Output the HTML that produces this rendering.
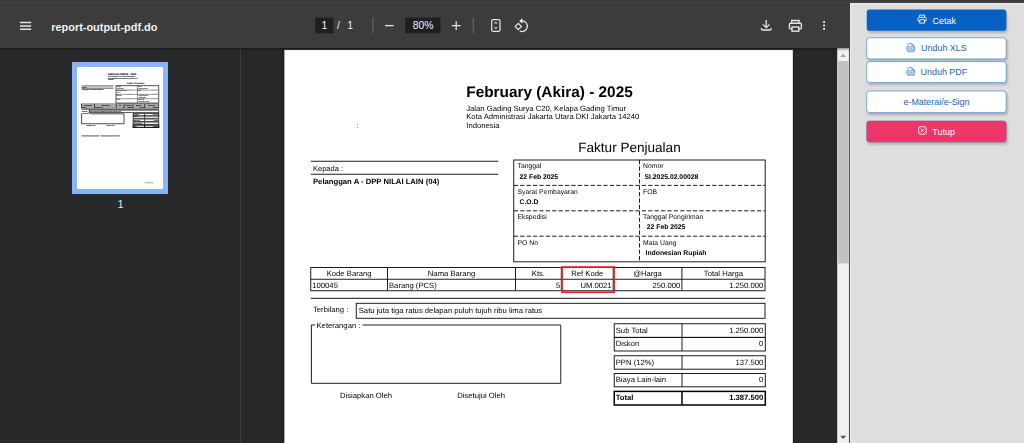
<!DOCTYPE html>
<html lang="id">
<head>
<meta charset="utf-8">
<title>report-output-pdf.do</title>
<style>
html,body{margin:0;padding:0;overflow:hidden;}
body{width:1024px;height:443px;overflow:hidden;position:relative;background:#282828;font-family:"Liberation Sans",sans-serif;}
.abs{position:absolute;}
#topstrip{left:0;top:0;width:1024px;height:3px;background:linear-gradient(#3b3c3b 0,#3b3d3b 1.2px,#434543 2.1px,#414341 2.7px,#3c3c3c 3px);}
#viewer{left:0;top:3px;width:850px;height:440px;background:#282828;overflow:hidden;}
#toolbar{left:0;top:0;width:850px;height:45px;background:#3c3c3c;box-shadow:0 1px 2.5px rgba(0,0,0,.5);z-index:5;}
#sidebar{left:0;top:45px;width:240px;height:395px;background:#28292b;border-right:1px solid #3c3c3c;}
#title{left:51.2px;top:16.5px;color:#f1f1f1;font-size:10.95px;font-weight:bold;line-height:14px;white-space:nowrap;letter-spacing:0;}
.tbtxt{color:#f1f1f1;font-size:10.4px;line-height:14px;white-space:nowrap;}
#thumbo{left:72px;top:59.3px;width:96.3px;height:131.3px;background:#8ab4f8;}
#thumb{left:76.8px;top:63.9px;width:86.5px;height:122.2px;background:#fff;overflow:hidden;}
#thumb svg{position:absolute;left:0;top:0;}
#pdfpage{left:284.0px;top:46.0px;width:510.0px;height:721.0px;}
#pdfpage svg{filter:drop-shadow(0 0 1.6px rgba(0,0,0,.7));overflow:visible;}
#pdfpage svg, #thumb svg{font-family:"Liberation Sans",sans-serif;text-rendering:geometricPrecision;}
#panel{left:850px;top:2.8px;width:174px;height:440.2px;overflow:hidden;background:#dedede;box-shadow:inset 1.2px 1.2px 0 #e9e9e9;}
.btn{left:16.5px;width:140px;box-sizing:border-box;font-size:8.95px;line-height:11px;display:flex;align-items:center;justify-content:center;white-space:nowrap;padding-top:2.6px;}
.btn svg{margin-right:5.4px;flex:none;position:relative;top:-2.1px;}
.b-blue{color:#fff;}
.b-out{color:#1565c0;padding-top:1.2px;}
.b-out svg{top:-1px;}
.b-red{color:#fff;}
</style>
</head>
<body>
<div id="topstrip" class="abs"></div>
<div id="viewer" class="abs">
  <div id="sidebar" class="abs"></div>
  <div id="thumbo" class="abs"></div>
  <div id="thumb" class="abs">
    <svg width="86.5" height="122.36" viewBox="0.35 0.85 508.5 719.3">
<text x="182.25" y="47.50" font-size="15.36" font-weight="bold" fill="#000" stroke="#000" stroke-width="0.5">February (Akira) - 2025</text>
<text x="182.25" y="61.60" font-size="7.68" fill="#000" stroke="#000" stroke-width="0.5">Jalan Gading Surya C20, Kelapa Gading Timur</text>
<text x="182.25" y="70.40" font-size="7.68" fill="#000" stroke="#000" stroke-width="0.5">Kota Administrasi Jakarta Utara DKI Jakarta 14240</text>
<text x="182.25" y="79.30" font-size="7.68" fill="#000" stroke="#000" stroke-width="0.5">Indonesia</text>
<text x="72.50" y="79.40" font-size="7.68" fill="#555" stroke="#000" stroke-width="0.5">:</text>
<text x="294.25" y="102.75" font-size="13.55" fill="#000" stroke="#000" stroke-width="0.5">Faktur Penjualan</text>
<line x1="26.75" y1="112.25" x2="214.25" y2="112.25" stroke="#1c1c1c" stroke-width="4.369999999999999"/>
<line x1="26.75" y1="125.25" x2="214.25" y2="125.25" stroke="#1c1c1c" stroke-width="4.369999999999999"/>
<text x="29.00" y="121.75" font-size="7.5" fill="#000" stroke="#000" stroke-width="0.5">Kepada :</text>
<text x="29.00" y="134.75" font-size="7.68" font-weight="bold" fill="#000" stroke="#000" stroke-width="0.5">Pelanggan A - DPP NILAI LAIN (04)</text>
<rect x="229.75" y="111.00" width="251.45" height="101.80" fill="none" stroke="#1c1c1c" stroke-width="4.369999999999999"/>
<line x1="229.75" y1="136.40" x2="481.20" y2="136.40" stroke="#1c1c1c" stroke-width="4.369999999999999" stroke-dasharray="4.3 2.1"/>
<line x1="229.75" y1="161.80" x2="481.20" y2="161.80" stroke="#1c1c1c" stroke-width="4.369999999999999" stroke-dasharray="4.3 2.1"/>
<line x1="229.75" y1="187.20" x2="481.20" y2="187.20" stroke="#1c1c1c" stroke-width="4.369999999999999" stroke-dasharray="4.3 2.1"/>
<line x1="355.50" y1="111.00" x2="355.50" y2="212.80" stroke="#1c1c1c" stroke-width="4.369999999999999" stroke-dasharray="4.3 2.1"/>
<text x="233.50" y="119.40" font-size="6.82" fill="#000" stroke="#000" stroke-width="0.5">Tanggal</text>
<text x="359.00" y="119.40" font-size="6.82" fill="#000" stroke="#000" stroke-width="0.5">Nomor</text>
<text x="235.50" y="129.55" font-size="6.82" font-weight="bold" fill="#000" stroke="#000" stroke-width="0.5">22 Feb 2025</text>
<text x="360.50" y="129.55" font-size="6.82" font-weight="bold" fill="#000" stroke="#000" stroke-width="0.5">SI.2025.02.00028</text>
<text x="233.50" y="144.80" font-size="6.82" fill="#000" stroke="#000" stroke-width="0.5">Syarat Pembayaran</text>
<text x="359.00" y="144.80" font-size="6.82" fill="#000" stroke="#000" stroke-width="0.5">FOB</text>
<text x="235.50" y="154.95" font-size="6.82" font-weight="bold" fill="#000" stroke="#000" stroke-width="0.5">C.O.D</text>
<text x="233.50" y="170.20" font-size="6.82" fill="#000" stroke="#000" stroke-width="0.5">Ekspedisi</text>
<text x="359.00" y="170.20" font-size="6.82" fill="#000" stroke="#000" stroke-width="0.5">Tanggal Pengiriman</text>
<text x="362.75" y="180.35" font-size="6.82" font-weight="bold" fill="#000" stroke="#000" stroke-width="0.5">22 Feb 2025</text>
<text x="233.50" y="195.60" font-size="6.82" fill="#000" stroke="#000" stroke-width="0.5">PO No</text>
<text x="359.00" y="195.60" font-size="6.82" fill="#000" stroke="#000" stroke-width="0.5">Mata Uang</text>
<text x="361.50" y="205.75" font-size="6.82" font-weight="bold" fill="#000" stroke="#000" stroke-width="0.5">Indonesian Rupiah</text>
<rect x="26.75" y="218.50" width="454.25" height="23.25" fill="none" stroke="#1c1c1c" stroke-width="4.369999999999999"/>
<line x1="26.75" y1="230.25" x2="481.00" y2="230.25" stroke="#1c1c1c" stroke-width="4.369999999999999"/>
<line x1="103.50" y1="218.50" x2="103.50" y2="241.75" stroke="#1c1c1c" stroke-width="4.369999999999999"/>
<line x1="231.50" y1="218.50" x2="231.50" y2="241.75" stroke="#1c1c1c" stroke-width="4.369999999999999"/>
<line x1="277.30" y1="218.50" x2="277.30" y2="241.75" stroke="#1c1c1c" stroke-width="4.369999999999999"/>
<line x1="329.20" y1="218.50" x2="329.20" y2="241.75" stroke="#1c1c1c" stroke-width="4.369999999999999"/>
<line x1="397.90" y1="218.50" x2="397.90" y2="241.75" stroke="#1c1c1c" stroke-width="4.369999999999999"/>
<text x="65.12" y="227.30" font-size="7.68" text-anchor="middle" fill="#000" stroke="#000" stroke-width="0.5">Kode Barang</text>
<text x="167.50" y="227.30" font-size="7.68" text-anchor="middle" fill="#000" stroke="#000" stroke-width="0.5">Nama Barang</text>
<text x="254.40" y="227.30" font-size="7.68" text-anchor="middle" fill="#000" stroke="#000" stroke-width="0.5">Kts.</text>
<text x="303.25" y="227.30" font-size="7.68" text-anchor="middle" fill="#000" stroke="#000" stroke-width="0.5">Ref Kode</text>
<text x="363.55" y="227.30" font-size="7.68" text-anchor="middle" fill="#000" stroke="#000" stroke-width="0.5">@Harga</text>
<text x="439.45" y="227.30" font-size="7.68" text-anchor="middle" fill="#000" stroke="#000" stroke-width="0.5">Total Harga</text>
<text x="28.30" y="239.30" font-size="7.68" fill="#000" stroke="#000" stroke-width="0.5">100045</text>
<text x="105.00" y="239.30" font-size="7.68" fill="#000" stroke="#000" stroke-width="0.5">Barang (PCS)</text>
<text x="276.30" y="239.30" font-size="7.68" text-anchor="end" fill="#000" stroke="#000" stroke-width="0.5">5</text>
<text x="327.60" y="239.30" font-size="7.68" text-anchor="end" fill="#000" stroke="#000" stroke-width="0.5">UM.0021</text>
<text x="396.30" y="239.30" font-size="7.68" text-anchor="end" fill="#000" stroke="#000" stroke-width="0.5">250.000</text>
<text x="479.30" y="239.30" font-size="7.68" text-anchor="end" fill="#000" stroke="#000" stroke-width="0.5">1.250.000</text>
<line x1="26.75" y1="249.30" x2="481.00" y2="249.30" stroke="#1c1c1c" stroke-width="4.6"/>
<text x="29.00" y="263.00" font-size="7.68" fill="#000" stroke="#000" stroke-width="0.5">Terbilang :</text>
<rect x="72.25" y="254.30" width="408.75" height="15.00" fill="none" stroke="#1c1c1c" stroke-width="4.369999999999999"/>
<text x="74.75" y="263.50" font-size="7.68" fill="#000" stroke="#000" stroke-width="0.5">Satu juta tiga ratus delapan puluh tujuh ribu lima ratus</text>
<path d="M31.00 276.00H27.40V334.30H276.75V276.00H78.50" fill="none" stroke="#111" stroke-width="4.369999999999999"/>
<text x="32.50" y="279.00" font-size="7.68" fill="#000" stroke="#000" stroke-width="0.5">Keterangan :</text>
<rect x="330.25" y="274.75" width="151.05" height="13.65" fill="none" stroke="#1c1c1c" stroke-width="4.369999999999999"/>
<line x1="398.00" y1="274.75" x2="398.00" y2="288.40" stroke="#1c1c1c" stroke-width="4.369999999999999"/>
<text x="331.75" y="283.65" font-size="7.68" fill="#000" stroke="#000" stroke-width="0.5">Sub Total</text>
<text x="479.30" y="283.65" font-size="7.68" text-anchor="end" fill="#000" stroke="#000" stroke-width="0.5">1.250.000</text>
<rect x="330.25" y="288.40" width="151.05" height="13.60" fill="none" stroke="#1c1c1c" stroke-width="4.369999999999999"/>
<line x1="398.00" y1="288.40" x2="398.00" y2="302.00" stroke="#1c1c1c" stroke-width="4.369999999999999"/>
<text x="331.75" y="297.30" font-size="7.68" fill="#000" stroke="#000" stroke-width="0.5">Diskon</text>
<text x="479.30" y="297.30" font-size="7.68" text-anchor="end" fill="#000" stroke="#000" stroke-width="0.5">0</text>
<rect x="330.25" y="306.75" width="151.05" height="13.45" fill="none" stroke="#1c1c1c" stroke-width="4.369999999999999"/>
<line x1="398.00" y1="306.75" x2="398.00" y2="320.20" stroke="#1c1c1c" stroke-width="4.369999999999999"/>
<text x="331.75" y="315.65" font-size="7.68" fill="#000" stroke="#000" stroke-width="0.5">PPN (12%)</text>
<text x="479.30" y="315.65" font-size="7.68" text-anchor="end" fill="#000" stroke="#000" stroke-width="0.5">137.500</text>
<rect x="330.25" y="324.50" width="151.05" height="13.30" fill="none" stroke="#1c1c1c" stroke-width="4.369999999999999"/>
<line x1="398.00" y1="324.50" x2="398.00" y2="337.80" stroke="#1c1c1c" stroke-width="4.369999999999999"/>
<text x="331.75" y="333.40" font-size="7.68" fill="#000" stroke="#000" stroke-width="0.5">Biaya Lain-lain</text>
<text x="479.30" y="333.40" font-size="7.68" text-anchor="end" fill="#000" stroke="#000" stroke-width="0.5">0</text>
<rect x="330.25" y="342.40" width="151.05" height="13.60" fill="none" stroke="#1c1c1c" stroke-width="6.8999999999999995"/>
<line x1="398.00" y1="342.40" x2="398.00" y2="356.00" stroke="#1c1c1c" stroke-width="6.8999999999999995"/>
<text x="331.75" y="350.90" font-size="7.68" font-weight="bold" fill="#000" stroke="#000" stroke-width="0.5">Total</text>
<text x="479.30" y="350.90" font-size="7.68" text-anchor="end" font-weight="bold" fill="#000" stroke="#000" stroke-width="0.5">1.387.500</text>
<text x="56.00" y="348.50" font-size="7.68" fill="#000" stroke="#000" stroke-width="0.5">Disiapkan Oleh</text>
<text x="173.25" y="348.50" font-size="7.68" fill="#000" stroke="#000" stroke-width="0.5">Disetujui Oleh</text>
<line x1="26.60" y1="406.00" x2="133.70" y2="406.00" stroke="#1c1c1c" stroke-width="4.369999999999999"/>
<line x1="142.50" y1="406.00" x2="251.00" y2="406.00" stroke="#1c1c1c" stroke-width="4.369999999999999"/>
<line x1="397.80" y1="681.50" x2="447.70" y2="681.50" stroke="#1c1c1c" stroke-width="2.3"/>
    </svg>
  </div>
  <div class="abs tbtxt" style="left:117.4px;top:193.8px;font-size:11px;color:#e8e8e8;">1</div>
  <div id="pdfpage" class="abs">
    <svg width="510.0" height="721.0" viewBox="0 0 510.0 721.0">
<rect x="0.35" y="0.85" width="508.5" height="719.3" fill="#fff"/>
<text x="182.25" y="47.50" font-size="15.36" font-weight="bold" fill="#000">February (Akira) - 2025</text>
<text x="182.25" y="61.60" font-size="7.68" fill="#000">Jalan Gading Surya C20, Kelapa Gading Timur</text>
<text x="182.25" y="70.40" font-size="7.68" fill="#000">Kota Administrasi Jakarta Utara DKI Jakarta 14240</text>
<text x="182.25" y="79.30" font-size="7.68" fill="#000">Indonesia</text>
<text x="72.50" y="79.40" font-size="7.68" fill="#555">:</text>
<text x="294.25" y="102.75" font-size="13.55" fill="#000">Faktur Penjualan</text>
<line x1="26.75" y1="112.25" x2="214.25" y2="112.25" stroke="#111" stroke-width="0.95"/>
<line x1="26.75" y1="125.25" x2="214.25" y2="125.25" stroke="#111" stroke-width="0.95"/>
<text x="29.00" y="121.75" font-size="7.5" fill="#000">Kepada :</text>
<text x="29.00" y="134.75" font-size="7.68" font-weight="bold" fill="#000">Pelanggan A - DPP NILAI LAIN (04)</text>
<rect x="229.75" y="111.00" width="251.45" height="101.80" fill="none" stroke="#111" stroke-width="0.95"/>
<line x1="229.75" y1="136.40" x2="481.20" y2="136.40" stroke="#111" stroke-width="0.95" stroke-dasharray="4.3 2.1"/>
<line x1="229.75" y1="161.80" x2="481.20" y2="161.80" stroke="#111" stroke-width="0.95" stroke-dasharray="4.3 2.1"/>
<line x1="229.75" y1="187.20" x2="481.20" y2="187.20" stroke="#111" stroke-width="0.95" stroke-dasharray="4.3 2.1"/>
<line x1="355.50" y1="111.00" x2="355.50" y2="212.80" stroke="#111" stroke-width="0.95" stroke-dasharray="4.3 2.1"/>
<text x="233.50" y="119.40" font-size="6.82" fill="#000">Tanggal</text>
<text x="359.00" y="119.40" font-size="6.82" fill="#000">Nomor</text>
<text x="235.50" y="129.55" font-size="6.82" font-weight="bold" fill="#000">22 Feb 2025</text>
<text x="360.50" y="129.55" font-size="6.82" font-weight="bold" fill="#000">SI.2025.02.00028</text>
<text x="233.50" y="144.80" font-size="6.82" fill="#000">Syarat Pembayaran</text>
<text x="359.00" y="144.80" font-size="6.82" fill="#000">FOB</text>
<text x="235.50" y="154.95" font-size="6.82" font-weight="bold" fill="#000">C.O.D</text>
<text x="233.50" y="170.20" font-size="6.82" fill="#000">Ekspedisi</text>
<text x="359.00" y="170.20" font-size="6.82" fill="#000">Tanggal Pengiriman</text>
<text x="362.75" y="180.35" font-size="6.82" font-weight="bold" fill="#000">22 Feb 2025</text>
<text x="233.50" y="195.60" font-size="6.82" fill="#000">PO No</text>
<text x="359.00" y="195.60" font-size="6.82" fill="#000">Mata Uang</text>
<text x="361.50" y="205.75" font-size="6.82" font-weight="bold" fill="#000">Indonesian Rupiah</text>
<rect x="26.75" y="218.50" width="454.25" height="23.25" fill="none" stroke="#111" stroke-width="0.95"/>
<line x1="26.75" y1="230.25" x2="481.00" y2="230.25" stroke="#111" stroke-width="0.95"/>
<line x1="103.50" y1="218.50" x2="103.50" y2="241.75" stroke="#111" stroke-width="0.95"/>
<line x1="231.50" y1="218.50" x2="231.50" y2="241.75" stroke="#111" stroke-width="0.95"/>
<line x1="277.30" y1="218.50" x2="277.30" y2="241.75" stroke="#111" stroke-width="0.95"/>
<line x1="329.20" y1="218.50" x2="329.20" y2="241.75" stroke="#111" stroke-width="0.95"/>
<line x1="397.90" y1="218.50" x2="397.90" y2="241.75" stroke="#111" stroke-width="0.95"/>
<text x="65.12" y="227.30" font-size="7.68" text-anchor="middle" fill="#000">Kode Barang</text>
<text x="167.50" y="227.30" font-size="7.68" text-anchor="middle" fill="#000">Nama Barang</text>
<text x="254.40" y="227.30" font-size="7.68" text-anchor="middle" fill="#000">Kts.</text>
<text x="303.25" y="227.30" font-size="7.68" text-anchor="middle" fill="#000">Ref Kode</text>
<text x="363.55" y="227.30" font-size="7.68" text-anchor="middle" fill="#000">@Harga</text>
<text x="439.45" y="227.30" font-size="7.68" text-anchor="middle" fill="#000">Total Harga</text>
<text x="28.30" y="239.30" font-size="7.68" fill="#000">100045</text>
<text x="105.00" y="239.30" font-size="7.68" fill="#000">Barang (PCS)</text>
<text x="276.30" y="239.30" font-size="7.68" text-anchor="end" fill="#000">5</text>
<text x="327.60" y="239.30" font-size="7.68" text-anchor="end" fill="#000">UM.0021</text>
<text x="396.30" y="239.30" font-size="7.68" text-anchor="end" fill="#000">250.000</text>
<text x="479.30" y="239.30" font-size="7.68" text-anchor="end" fill="#000">1.250.000</text>
<rect x="278.05" y="218.05" width="52.05" height="25.20" fill="none" stroke="#e8202a" stroke-width="1.7"/>
<line x1="26.75" y1="249.30" x2="481.00" y2="249.30" stroke="#111" stroke-width="1.0"/>
<text x="29.00" y="263.00" font-size="7.68" fill="#000">Terbilang :</text>
<rect x="72.25" y="254.30" width="408.75" height="15.00" fill="none" stroke="#111" stroke-width="0.95"/>
<text x="74.75" y="263.50" font-size="7.68" fill="#000">Satu juta tiga ratus delapan puluh tujuh ribu lima ratus</text>
<path d="M31.00 276.00H27.40V334.30H276.75V276.00H78.50" fill="none" stroke="#111" stroke-width="0.95"/>
<text x="32.50" y="279.00" font-size="7.68" fill="#000">Keterangan :</text>
<rect x="330.25" y="274.75" width="151.05" height="13.65" fill="none" stroke="#111" stroke-width="0.95"/>
<line x1="398.00" y1="274.75" x2="398.00" y2="288.40" stroke="#111" stroke-width="0.95"/>
<text x="331.75" y="283.65" font-size="7.68" fill="#000">Sub Total</text>
<text x="479.30" y="283.65" font-size="7.68" text-anchor="end" fill="#000">1.250.000</text>
<rect x="330.25" y="288.40" width="151.05" height="13.60" fill="none" stroke="#111" stroke-width="0.95"/>
<line x1="398.00" y1="288.40" x2="398.00" y2="302.00" stroke="#111" stroke-width="0.95"/>
<text x="331.75" y="297.30" font-size="7.68" fill="#000">Diskon</text>
<text x="479.30" y="297.30" font-size="7.68" text-anchor="end" fill="#000">0</text>
<rect x="330.25" y="306.75" width="151.05" height="13.45" fill="none" stroke="#111" stroke-width="0.95"/>
<line x1="398.00" y1="306.75" x2="398.00" y2="320.20" stroke="#111" stroke-width="0.95"/>
<text x="331.75" y="315.65" font-size="7.68" fill="#000">PPN (12%)</text>
<text x="479.30" y="315.65" font-size="7.68" text-anchor="end" fill="#000">137.500</text>
<rect x="330.25" y="324.50" width="151.05" height="13.30" fill="none" stroke="#111" stroke-width="0.95"/>
<line x1="398.00" y1="324.50" x2="398.00" y2="337.80" stroke="#111" stroke-width="0.95"/>
<text x="331.75" y="333.40" font-size="7.68" fill="#000">Biaya Lain-lain</text>
<text x="479.30" y="333.40" font-size="7.68" text-anchor="end" fill="#000">0</text>
<rect x="330.25" y="342.40" width="151.05" height="13.60" fill="none" stroke="#000" stroke-width="1.5"/>
<line x1="398.00" y1="342.40" x2="398.00" y2="356.00" stroke="#000" stroke-width="1.5"/>
<text x="331.75" y="350.90" font-size="7.68" font-weight="bold" fill="#000">Total</text>
<text x="479.30" y="350.90" font-size="7.68" text-anchor="end" font-weight="bold" fill="#000">1.387.500</text>
<text x="56.00" y="348.50" font-size="7.68" fill="#000">Disiapkan Oleh</text>
<text x="173.25" y="348.50" font-size="7.68" fill="#000">Disetujui Oleh</text>
<line x1="26.60" y1="406.00" x2="133.70" y2="406.00" stroke="#111" stroke-width="0.95"/>
<line x1="142.50" y1="406.00" x2="251.00" y2="406.00" stroke="#111" stroke-width="0.95"/>
<line x1="397.80" y1="681.50" x2="447.70" y2="681.50" stroke="#888" stroke-width="0.5"/>
    </svg>
  </div>
  <svg class="abs" style="left:837px;top:45px" width="13" height="395" viewBox="0 0 13 395">
    <rect x="0.2" y="0" width="11.8" height="395" fill="#f1f1f1"/>
    <rect x="11.95" y="0" width="1.05" height="395" fill="#505050"/>
    <rect x="1.2" y="13" width="10.4" height="202.5" fill="#c1c1c1"/>
    <path d="M3.2 9 L6.2 5.7 L9.2 9Z" fill="#a3a3a3"/>
    <path d="M3.2 387.7 L9.2 387.7 L6.2 391Z" fill="#505050"/>
  </svg>
  <div id="toolbar" class="abs">
    <svg class="abs" style="left:0;top:0" width="850" height="45" viewBox="0 0 850 45" fill="none" stroke="#e4e4e4">
      <rect x="315.2" y="14.5" width="18.3" height="15.8" fill="#1f1f1f" stroke="none"/>
      <rect x="405.2" y="14.5" width="35.3" height="15.8" fill="#1f1f1f" stroke="none"/>
      <path d="M372.9 14.5V30.3M473.2 14.5V30.3" stroke="#6c6c6c" stroke-width="1"/>
      <!-- hamburger -->
      <path d="M20 19.6H31.2M20 22.9H31.2M20 26.2H31.2" stroke-width="1.5"/>
      <!-- minus / plus -->
      <path d="M385 22.6H393.6" stroke-width="1.3"/>
      <path d="M451.8 22.6H460.6M456.2 18.2V27" stroke-width="1.3"/>
      <!-- fit to page -->
      <rect x="491.7" y="16.5" width="8.3" height="11.9" rx="1.5" stroke-width="1.25"/>
      <path d="M494.4 20.3L495.85 18.8L497.3 20.3ZM494.4 24.6L495.85 26.1L497.3 24.6Z" fill="#e4e4e4" stroke-width="0.3"/>
      <!-- rotate -->
      <path d="M521.6 17.9A5.3 5.3 0 1 1 519.8 28.0" stroke-width="1.25"/>
      <path d="M522.4 15.2L519.2 17.9L522.4 20.6Z" fill="#f1f1f1" stroke="none"/>
      <rect x="-2.25" y="-2.25" width="4.5" height="4.5" transform="translate(518.3 23.5) rotate(45)" stroke-width="1.15"/>
      <!-- download -->
      <path d="M766.2 17V24.4M762.9 21.4L766.2 24.6L769.5 21.4M761.4 24.9V25.9Q761.4 27 762.5 27H770Q771.1 27 771.1 25.9V24.9" stroke-width="1.3"/>
      <!-- print -->
      <path d="M791.7 20.3V17.5H799V20.3" stroke-width="1.4"/>
      <rect x="789.4" y="20.3" width="12" height="5.6" rx="1.2" stroke-width="1.4"/>
      <rect x="792" y="24" width="6.8" height="4.2" fill="#3c3c3c" stroke-width="1.4"/>
      <!-- more -->
      <g fill="#f1f1f1" stroke="none"><rect x="823.2" y="18.2" width="1.8" height="1.8"/><rect x="823.2" y="21.6" width="1.8" height="1.8"/><rect x="823.2" y="25" width="1.8" height="1.8"/></g>
    </svg>
    <div id="title" class="abs">report-output-pdf.do</div>
    <div class="abs tbtxt" style="left:321.6px;top:16.3px;">1</div>
    <div class="abs tbtxt" style="left:337px;top:16.3px;">/</div>
    <div class="abs tbtxt" style="left:347.2px;top:16.3px;">1</div>
    <div class="abs tbtxt" style="left:412.7px;top:16.3px;">80%</div>
  </div>
</div>
<div id="panel" class="abs">
  <svg class="abs" style="left:0;top:0" width="174" height="441" viewBox="0 0 174 441">
    <defs><filter id="bsh" x="-10%" y="-30%" width="120%" height="170%"><feGaussianBlur stdDeviation="1.1"/></filter></defs>
    <rect x="18.00" y="8.80" width="139.50" height="21.20" rx="3" fill="#000" opacity="0.2" filter="url(#bsh)"/>
    <rect x="17.50" y="36.55" width="140.30" height="21.95" rx="3" fill="#000" opacity="0.2" filter="url(#bsh)"/>
    <rect x="17.50" y="60.45" width="140.30" height="21.65" rx="3" fill="#000" opacity="0.2" filter="url(#bsh)"/>
    <rect x="17.50" y="89.80" width="140.30" height="22.40" rx="3" fill="#000" opacity="0.2" filter="url(#bsh)"/>
    <rect x="17.50" y="119.80" width="140.30" height="21.80" rx="3" fill="#000" opacity="0.2" filter="url(#bsh)"/>
    <rect x="16.80" y="6.60" width="139.50" height="21.20" rx="2.6" fill="#0560c2"/>
    <rect x="16.70" y="34.75" width="139.50" height="21.15" rx="2.8" fill="#fff" stroke="#5f97d6" stroke-width="0.8"/>
    <rect x="16.70" y="58.65" width="139.50" height="20.85" rx="2.8" fill="#fff" stroke="#5f97d6" stroke-width="0.8"/>
    <rect x="16.70" y="88.00" width="139.50" height="21.60" rx="2.8" fill="#fff" stroke="#5f97d6" stroke-width="0.8"/>
    <rect x="16.70" y="118.00" width="139.50" height="21.00" rx="2.8" fill="#ec3768" stroke="#8a63a0" stroke-width="0.7"/>
  </svg>
  <div class="abs btn b-blue" style="top:6.60px;height:21.20px;"><svg width="10.2" height="10.2" viewBox="0 0 11 11" fill="none" stroke="#fff" stroke-width="0.95"><path d="M2.8 3.6V1.2H8.2V3.6"/><rect x="0.9" y="3.6" width="9.2" height="4.4" rx="1.6"/><rect x="3" y="6.2" width="5" height="3.6" fill="#0560c2"/></svg>Cetak</div>
  <div class="abs btn b-out" style="top:34.35px;height:21.95px;"><svg width="9.4" height="9.6" viewBox="0 0 10.4 11" fill="none" stroke="#2a72c8" stroke-width="0.75"><path d="M2 4.4V1.8Q2 0.8 3 0.8H6.6L9.2 3.3V9.2Q9.2 10.2 8.2 10.2H3Q2 10.2 2 9.2V8.4"/><path d="M6.6 0.8V3.3H9.2" stroke-width="0.7"/><rect x="0.6" y="4.5" width="9.2" height="3.8" rx="0.9" fill="#eef4fb" stroke-width="0.75"/><path d="M2.7 5.7V7.1M4.4 5.7V7.1M6.1 5.7V7.1M7.7 5.7V7.1" stroke-width="0.65"/></svg>Unduh XLS</div>
  <div class="abs btn b-out" style="top:58.25px;height:21.65px;"><svg width="9.4" height="9.6" viewBox="0 0 10.4 11" fill="none" stroke="#2a72c8" stroke-width="0.75"><path d="M2 4.4V1.8Q2 0.8 3 0.8H6.6L9.2 3.3V9.2Q9.2 10.2 8.2 10.2H3Q2 10.2 2 9.2V8.4"/><path d="M6.6 0.8V3.3H9.2" stroke-width="0.7"/><rect x="0.6" y="4.5" width="9.2" height="3.8" rx="0.9" fill="#eef4fb" stroke-width="0.75"/><path d="M2.7 5.7V7.1M4.4 5.7V7.1M6.1 5.7V7.1M7.7 5.7V7.1" stroke-width="0.65"/></svg>Unduh PDF</div>
  <div class="abs btn b-out" style="top:87.60px;height:22.40px;">e-Materai/e-Sign</div>
  <div class="abs btn b-red" style="top:117.60px;height:21.80px;"><svg width="8.8" height="8.8" viewBox="0 0 10 10" fill="none" stroke="#fff" stroke-width="1"><rect x="0.8" y="0.8" width="8.4" height="8.4" rx="1.5"/><path d="M3 3L7 7M7 3L3 7" stroke-width="1.1"/></svg>Tutup</div>
</div>
</body>
</html>
